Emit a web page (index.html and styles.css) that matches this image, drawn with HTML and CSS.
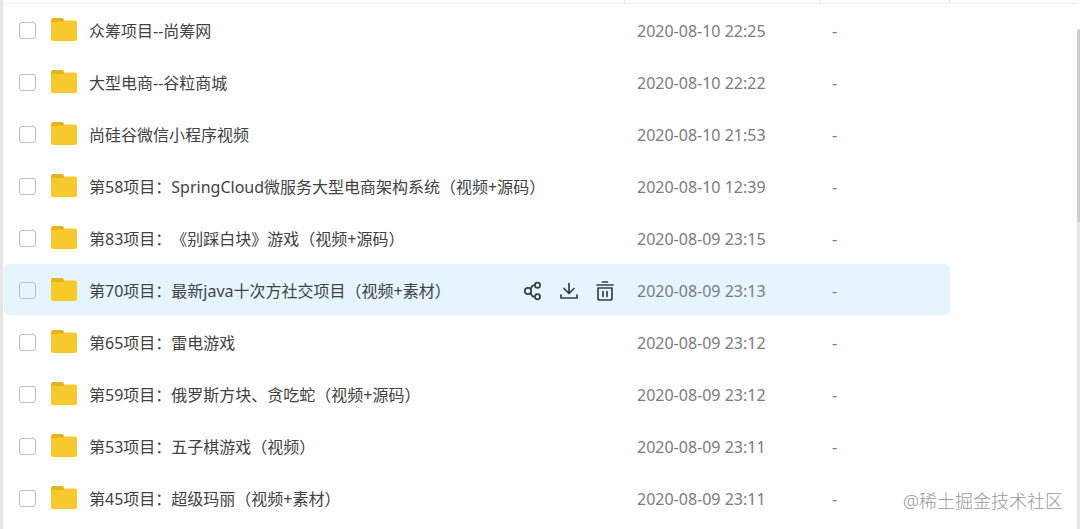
FILE: index.html
```html
<!DOCTYPE html>
<html lang="zh-CN">
<head>
  <meta charset="UTF-8">
  <meta name="viewport" content="width=device-width, initial-scale=1.0">
  <title>文件列表</title>
  <link rel="stylesheet" href="styles.css">
</head>
<body>
  <!-- 文件夹图标，每一行共用 -->
  <svg class="sprite" aria-hidden="true">
    <symbol id="folder" viewBox="0 0 26 23">
      <path fill="#e2b51f" d="M2 0h9q1 0 1.5 1l1 2v6H0V2Q0 0 2 0z"/>
      <path fill="#f8c92d" d="M0 5Q0 4 1 4h10l2-1q.5-.5 1.5-.5H24q2 0 2 2V21q0 2-2 2H2q-2 0-2-2z"/>
    </symbol>
  </svg>

  <div class="page">
    <main class="list">
      <table>
        <colgroup>
          <col>
          <col class="col-date">
          <col class="col-size">
        </colgroup>
        <thead>
          <tr>
            <th aria-label="文件名"></th>
            <th aria-label="修改时间"></th>
            <th aria-label="大小"></th>
          </tr>
        </thead>
        <tbody>
          <tr>
            <td>
              <div class="file">
                <input type="checkbox" id="f1">
                <svg class="folder"><use href="#folder"/></svg>
                <label for="f1">众筹项目--尚筹网</label>
              </div>
            </td>
            <td class="info">2020-08-10 22:25</td>
            <td class="info">-</td>
          </tr>
          <tr>
            <td>
              <div class="file">
                <input type="checkbox" id="f2">
                <svg class="folder"><use href="#folder"/></svg>
                <label for="f2">大型电商--谷粒商城</label>
              </div>
            </td>
            <td class="info">2020-08-10 22:22</td>
            <td class="info">-</td>
          </tr>
          <tr>
            <td>
              <div class="file">
                <input type="checkbox" id="f3">
                <svg class="folder"><use href="#folder"/></svg>
                <label for="f3">尚硅谷微信小程序视频</label>
              </div>
            </td>
            <td class="info">2020-08-10 21:53</td>
            <td class="info">-</td>
          </tr>
          <tr>
            <td>
              <div class="file">
                <input type="checkbox" id="f4">
                <svg class="folder"><use href="#folder"/></svg>
                <label for="f4">第58项目：SpringCloud微服务大型电商架构系统（视频+源码）</label>
              </div>
            </td>
            <td class="info">2020-08-10 12:39</td>
            <td class="info">-</td>
          </tr>
          <tr>
            <td>
              <div class="file">
                <input type="checkbox" id="f5">
                <svg class="folder"><use href="#folder"/></svg>
                <label for="f5">第83项目：《别踩白块》游戏（视频+源码）</label>
              </div>
            </td>
            <td class="info">2020-08-09 23:15</td>
            <td class="info">-</td>
          </tr>
          <tr class="active">
            <td>
              <div class="file">
                <input type="checkbox" id="f6">
                <svg class="folder"><use href="#folder"/></svg>
                <label for="f6">第70项目：最新java十次方社交项目（视频+素材）</label>
                <div class="actions">
                  <button type="button" aria-label="分享">
                    <svg viewBox="0 0 20 20">
                      <circle cx="5" cy="10" r="3.2"/>
                      <circle cx="14.5" cy="4.2" r="2.6"/>
                      <circle cx="14.5" cy="15.8" r="2.6"/>
                      <path d="M7.500 8l1-2q1-1.800 3.200-1.800M7.500 12l1 2q1 1.800 3.200 1.800"/>
                    </svg>
                  </button>
                  <button type="button" aria-label="下载">
                    <svg viewBox="0 0 20 20">
                      <path d="M10 2.5V12M5 7.500l5 5 5-5M2 14v3h16v-3"/>
                    </svg>
                  </button>
                  <button type="button" aria-label="删除">
                    <svg viewBox="0 0 20 20">
                      <path d="M7.500 1h5M2 4h16M3 7h14v10q0 2-2 2H5q-2 0-2-2zM8 10.500v5M12 10.500v5"/>
                    </svg>
                  </button>
                </div>
              </div>
            </td>
            <td class="info">2020-08-09 23:13</td>
            <td class="info">-</td>
          </tr>
          <tr>
            <td>
              <div class="file">
                <input type="checkbox" id="f7">
                <svg class="folder"><use href="#folder"/></svg>
                <label for="f7">第65项目：雷电游戏</label>
              </div>
            </td>
            <td class="info">2020-08-09 23:12</td>
            <td class="info">-</td>
          </tr>
          <tr>
            <td>
              <div class="file">
                <input type="checkbox" id="f8">
                <svg class="folder"><use href="#folder"/></svg>
                <label for="f8">第59项目：俄罗斯方块、贪吃蛇（视频+源码）</label>
              </div>
            </td>
            <td class="info">2020-08-09 23:12</td>
            <td class="info">-</td>
          </tr>
          <tr>
            <td>
              <div class="file">
                <input type="checkbox" id="f9">
                <svg class="folder"><use href="#folder"/></svg>
                <label for="f9">第53项目：五子棋游戏（视频）</label>
              </div>
            </td>
            <td class="info">2020-08-09 23:11</td>
            <td class="info">-</td>
          </tr>
          <tr>
            <td>
              <div class="file">
                <input type="checkbox" id="f10">
                <svg class="folder"><use href="#folder"/></svg>
                <label for="f10">第45项目：超级玛丽（视频+素材）</label>
              </div>
            </td>
            <td class="info">2020-08-09 23:11</td>
            <td class="info">-</td>
          </tr>
        </tbody>
      </table>
    </main>

    <aside class="side"></aside>

    <div class="scroll">
      <div class="thumb"></div>
    </div>

    <div class="watermark">@稀土掘金技术社区</div>
  </div>
</body>
</html>
```
FILE: styles.css
```css
* {
  box-sizing: border-box;
}
body {
  margin: 0;
  background: #fefefe;
  color: #424242;
  font-family: "Noto Sans", "Noto Sans CJK SC", sans-serif;
  font-size: 16px;
  line-height: 24px;
  text-spacing-trim: space-all;
}
.sprite {
  position: absolute;
  width: 0;
  height: 0;
}
.page {
  position: relative;
  display: flex;
  min-height: 100vh;
  overflow: hidden;
  border-left: 3px solid #e6e6e6;
}
.list {
  flex: 1;
  padding-left: 1px;
}
table {
  width: 100%;
  table-layout: fixed;
  border-collapse: separate;
  border-spacing: 0;
}
.col-date {
  width: 195px;
}
.col-size {
  width: 130px;
}

/* 表头 */
th {
  height: 4px;
  padding: 0;
  border-right: 1px solid #e9e9e9;
  border-bottom: 1px solid #f0f0f0;
}

/* 文件行 */
td {
  height: 52px;
  padding: 2px 0 0;
  border-bottom: 1px solid #fefefe;
}
.file {
  display: flex;
  align-items: center;
  padding: 0 10px 0 15px;
  white-space: nowrap;
}
.file input {
  appearance: none;
  width: 17px;
  height: 17px;
  margin: 0 15px 0 0;
  border: 1px solid #bdbdbd;
  border-radius: 3px;
  background: transparent;
}
.file input:checked {
  background: #09aaff;
}
.folder {
  width: 26px;
  height: 23px;
  margin: 0 12px 2px 0;
}
.info {
  padding-left: 12px;
  color: #7c7c7c;
}
.active td {
  background: #e5f4fd;
  background-clip: padding-box;
}
.active td:first-child {
  border-radius: 5px 0 0 5px;
}
.active td:last-child {
  border-radius: 0 5px 5px 0;
}

/* 操作按钮 */
.actions {
  display: flex;
  gap: 16px;
  margin-left: auto;
}
.actions button {
  display: flex;
  padding: 0;
  border: none;
  background: none;
  cursor: pointer;
}
.actions svg {
  width: 20px;
  height: 20px;
  fill: none;
  stroke: #33404a;
  stroke-width: 1.7;
  stroke-linecap: round;
  stroke-linejoin: round;
}

/* 右侧栏和滚动条 */
.side {
  width: 127px;
  margin-top: 3px;
  border-top: 1px solid #ececec;
}
.scroll {
  width: 3px;
  padding-top: 29px;
  background: linear-gradient(#fefefe 29px, #e6e6e6 29px);
}
.thumb {
  height: 193px;
  border-radius: 2px 0 0 0;
  background: #cfcfcf;
}
.watermark {
  position: absolute;
  right: 17px;
  bottom: 16px;
  color: #999;
  font-size: 18px;
  font-weight: 300;
}
```
